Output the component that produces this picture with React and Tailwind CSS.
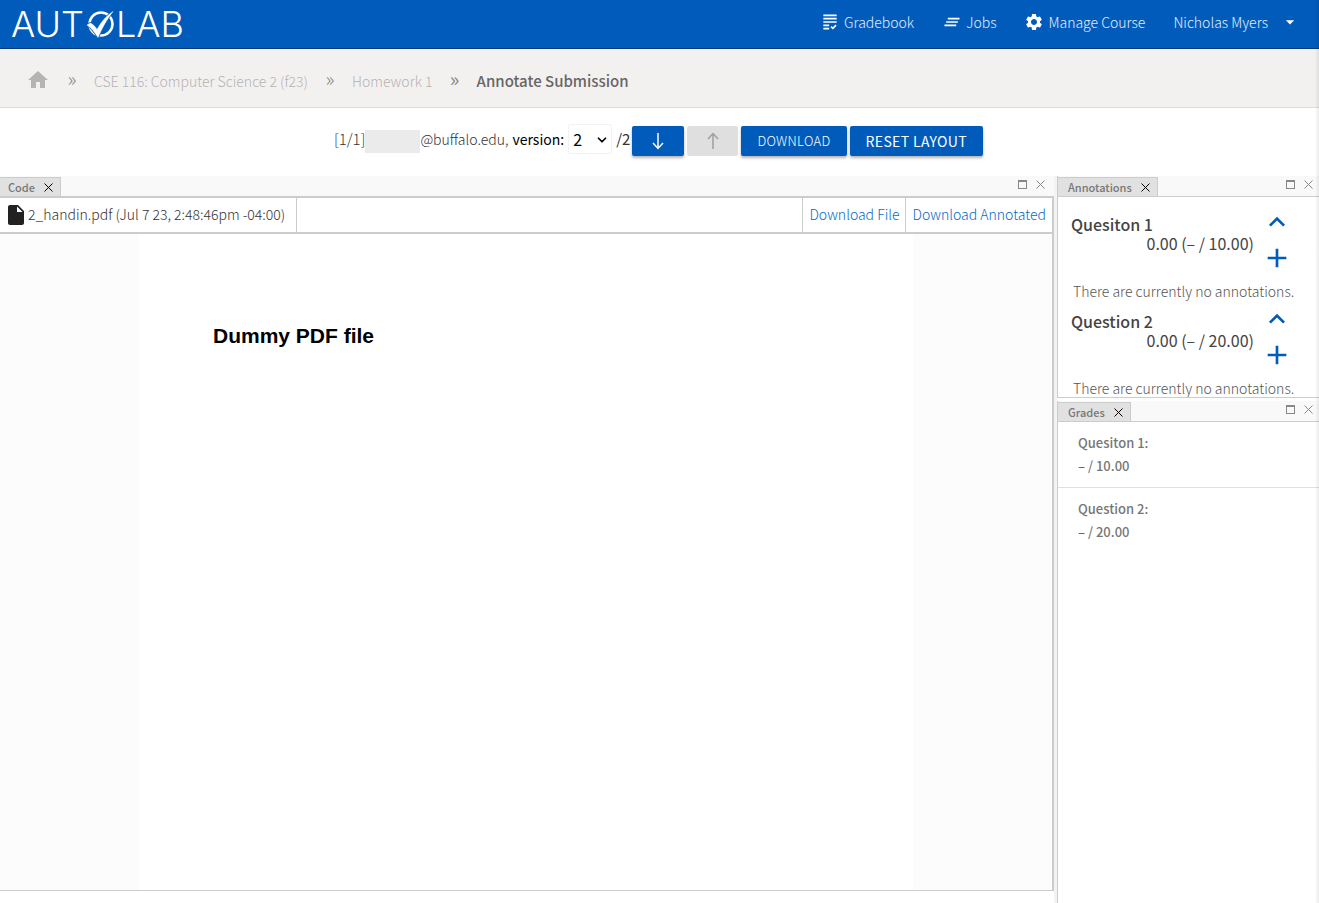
import { useState } from 'react';
import { MdGrading, MdClearAll, MdSettings, MdHome, MdInsertDriveFile, MdExpandLess, MdAdd, MdArrowDropDown } from 'react-icons/md';
import { ChevronDown } from 'lucide-react';

const navItems = [
  { label: 'Gradebook', icon: MdGrading },
  { label: 'Jobs', icon: MdClearAll },
  { label: 'Manage Course', icon: MdSettings },
];

const problems = [
  { name: 'Quesiton 1', max: '10.00' },
  { name: 'Question 2', max: '20.00' },
];

function Logo() {
  return (
    <a href="#" aria-label="Autolab home" className="flex items-center gap-[2px] font-['Inter',sans-serif] text-[36px] font-light leading-12 text-white">
      <span>AUT</span>
      <svg className="h-7 w-7" viewBox="0 0 28 28" fill="none">
        <circle cx="15" cy="14" r="11.500" stroke="currentColor" strokeWidth="2.500" />
        <path d="M1 15L4.500 13C7 14.500 9 16 11 19.500C15 12 20 6 27 1.500C21 9 16 18 12 27.500C8.500 22 5.500 18 1 15Z" fill="#005bbb" stroke="#005bbb" strokeWidth="2" />
        <path d="M1 15L4.500 13C7 14.500 9 16 11 19.500C15 12 20 6 27 1.500C21 9 16 18 12 27.500C8.500 22 5.500 18 1 15Z" fill="currentColor" stroke="currentColor" strokeWidth="0.500" />
      </svg>
      <span>LAB</span>
    </a>
  );
}

function Header() {
  return (
    <header className="flex h-[49px] items-center justify-between border-b border-[#003a78] bg-[#005bbb] pl-[11px] pr-[19px] text-white">
      <Logo />
      <nav className="flex items-center pb-1 text-sm font-light leading-5 text-white/90">
        {navItems.map(({ label, icon: Icon }) => (
          <a key={label} href="#" className="mr-7 flex items-center gap-1">
            <Icon className="size-5 text-white" />
            {label}
          </a>
        ))}
        <button type="button" className="flex items-center gap-3">
          Nicholas Myers
          <MdArrowDropDown className="size-5 text-white" />
        </button>
      </nav>
    </header>
  );
}

function Breadcrumbs() {
  return (
    <nav aria-label="Breadcrumb" className="flex h-[59px] items-center border-b border-[#dcdcdc] bg-[#f3f1f0] pl-[26px] pt-1 text-sm leading-5 text-[#b5b3b3]">
      <a href="#" aria-label="Home">
        <MdHome className="size-6" />
      </a>
      <span className="w-11 pb-[2px] text-center text-xl font-light text-[#888]">»</span>
      <a href="#" className="pt-[2px] font-light">CSE 116: Computer Science 2 (f23)</a>
      <span className="w-11 pb-[2px] text-center text-xl font-light text-[#888]">»</span>
      <a href="#" className="pt-[2px] font-light">Homework 1</a>
      <span className="w-11 pb-[2px] text-center text-xl text-[#888]">»</span>
      <span className="pt-[2px] text-[15px] font-medium text-[#666]">Annotate Submission</span>
    </nav>
  );
}

function ArrowIcon({ up }) {
  return (
    <svg className="h-[18px] w-3" viewBox="0 0 12 18" fill="none" stroke="currentColor" strokeWidth="1.500">
      {up ? <path d="M6 17V2M1 7L6 1.500L11 7" /> : <path d="M6 1V16M1 11L6 16.500L11 11" />}
    </svg>
  );
}

function Toolbar() {
  const [version, setVersion] = useState('2');
  const button = 'flex h-[30px] items-center justify-center rounded-xs bg-[#005bbb] text-white shadow-[0_2px_3px_rgba(0,0,0,0.3)]';

  return (
    <div className="flex h-[68px] items-center justify-center pb-[2px] pr-[2px] text-sm leading-5">
      <div className="flex items-center pb-1">
        <span className="text-[15px] font-light text-[#333]">[1/1]</span>
        <span className="mt-1 h-[23px] w-[55px] bg-[#ebebeb]" />
        <span className="font-light text-[#333]">@buffalo.edu,</span>
        <label htmlFor="version" className="px-1 text-black">version:</label>
        <div className="relative">
          <select
            id="version"
            value={version}
            onChange={(e) => setVersion(e.target.value)}
            className="block h-[30px] w-11 appearance-none rounded-xs border border-[#f2f2f2] bg-white pl-1 text-base leading-6 text-black"
          >
            <option>1</option>
            <option>2</option>
          </select>
          <ChevronDown className="pointer-events-none absolute right-[3px] top-[9px] size-[14px] text-black" strokeWidth={3} />
        </div>
        <span className="pl-1 pr-[2px] text-[15px] text-[#333]">/2</span>
      </div>
      <div className="flex gap-[3px]">
        <button type="button" aria-label="Next submission" className={`${button} w-[52px]`}>
          <ArrowIcon />
        </button>
        <button type="button" disabled aria-label="Previous submission" className="flex h-[30px] w-[51px] items-center justify-center rounded-xs bg-[#dfdfdf] text-[#9f9f9f]">
          <ArrowIcon up />
        </button>
        <button type="button" className={`${button} px-4 text-[13px] font-light tracking-wide`}>DOWNLOAD</button>
        <button type="button" className={`${button} px-4 text-sm tracking-wide`}>RESET LAYOUT</button>
      </div>
    </div>
  );
}

function CloseIcon({ className }) {
  return (
    <svg className={className} viewBox="0 0 9 9" stroke="currentColor" strokeWidth="1">
      <path d="M0.500 0.500L8.500 8.500M8.500 0.500L0.500 8.500" />
    </svg>
  );
}

function PanelHeader({ title, first }) {
  return (
    <div className={`flex h-5 justify-between bg-[#f9f9f9] ${first ? '' : 'border-l border-[#ccc]'}`}>
      <div className={`mt-px flex items-center gap-[9px] border-r border-t border-[#ccc] bg-[#e1e1e1] pr-[7px] text-[11px] font-medium leading-4 text-[#777] ${first ? 'pl-2' : 'pl-[10px]'}`}>
        {title}
        <button type="button" aria-label={`Close ${title}`} className="text-black">
          <CloseIcon className="size-[9px]" />
        </button>
      </div>
      <div className={`flex items-center gap-[9px] pb-[3px] text-[#888] ${first ? 'pr-[9px]' : 'pr-[6px]'}`}>
        <button type="button" aria-label={`Maximise ${title}`} className="h-[9px] w-[9px] border border-t-2 border-[#888]" />
        <button type="button" aria-label={`Close ${title} panel`}>
          <CloseIcon className="size-[9px]" />
        </button>
      </div>
    </div>
  );
}

function CodePanel() {
  return (
    <section className="mb-3 flex min-w-0 flex-1 flex-col">
      <PanelHeader title="Code" first />
      <div className="flex flex-1 flex-col border-b border-r-2 border-t-2 border-[#ccc]">
        <div className="flex h-9 shrink-0 border-b-2 border-[#ccc] text-sm font-light leading-8">
          <div className="flex items-start border-r border-[#ccc] px-1 text-[#333]">
            <MdInsertDriveFile className="mt-[5px] size-6 shrink-0 text-[#222]" />
            <span className="pr-[7px]">2_handin.pdf (Jul 7 23, 2:48:46pm -04:00)</span>
          </div>
          <a href="#" className="ml-auto border-l border-[#ccc] px-[6px] text-[#0869c6]">Download File</a>
          <a href="#" className="border-l border-[#ccc] px-[6px] text-[#0869c6]">Download Annotated</a>
        </div>
        <div className="flex flex-1 justify-center bg-[#fcfcfc]">
          <div className="w-[774px] bg-white pl-[74px] pt-[88px] font-['Liberation_Sans',sans-serif] text-[21px] font-bold leading-7 text-black">
            Dummy PDF file
          </div>
        </div>
      </div>
    </section>
  );
}

function AnnotationsPanel() {
  return (
    <section className="h-[222px] overflow-hidden border-b border-[#ccc]">
      <PanelHeader title="Annotations" />
      <div className="h-[201px] overflow-hidden border-l border-t border-[#ccc] pl-[13px] pt-[9px]">
        {problems.map((problem) => (
          <div key={problem.name} className="h-[97px]">
            <div className="flex h-[73px] gap-[7px] text-base leading-5 text-[#444]">
              <div className="w-[183px] pt-2">
                <h3 className="font-medium">{problem.name}</h3>
                <p className="-mt-px text-right">0.00 (– / {problem.max})</p>
              </div>
              <div className="flex flex-col items-center gap-1 text-[#005bbb]">
                <button type="button" aria-label={`Collapse ${problem.name}`}>
                  <MdExpandLess className="size-8" />
                </button>
                <button type="button" aria-label={`Add annotation to ${problem.name}`}>
                  <MdAdd className="size-8" />
                </button>
              </div>
            </div>
            <p className="whitespace-nowrap pl-[2px] text-sm font-light leading-6 text-[#555]">There are currently no annotations.</p>
          </div>
        ))}
      </div>
    </section>
  );
}

function GradesPanel() {
  return (
    <section className="flex flex-1 flex-col pt-[3px]">
      <PanelHeader title="Grades" />
      <ul className="flex-1 border-l border-t border-[#ccc] text-[13px] font-medium leading-[23px] text-[#777]">
        {problems.map((problem, i) => (
          <li key={problem.name} className={`h-[66px] pl-5 pt-[9px] ${i === 0 ? 'border-b border-[#e0e0e0]' : ''}`}>
            <p>{problem.name}:</p>
            <p><span className="text-[#1a9c1a]">–</span> / {problem.max}</p>
          </li>
        ))}
      </ul>
    </section>
  );
}

export default function App() {
  return (
    <div className="relative flex min-h-screen flex-col bg-white font-['Noto_Sans_CJK_SC','Noto_Sans',sans-serif]">
      <Header />
      <Breadcrumbs />
      <Toolbar />
      <main className="flex flex-1">
        <CodePanel />
        <div className="w-[3px] bg-[#f3f3f3]" />
        <aside className="flex w-[262px] flex-col">
          <AnnotationsPanel />
          <GradesPanel />
        </aside>
      </main>
      <div className="pointer-events-none absolute inset-y-0 right-0 w-1 bg-linear-to-l from-black/8 to-transparent" />
    </div>
  );
}
